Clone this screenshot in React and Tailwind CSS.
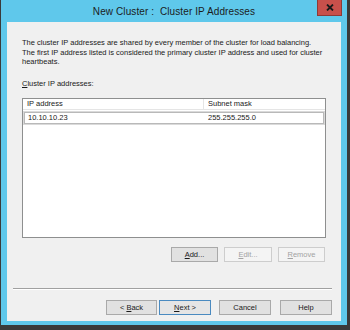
import React from 'react';

const font = { fontFamily: '"Liberation Sans", Arial, sans-serif' };

function Btn({ children, w, disabled, primary }) {
  let cls = 'h-[15px] flex items-center justify-center text-[7.5px] border ';
  if (disabled) cls += 'border-[#cdcdcd] bg-[#f4f4f4] text-[#a3a3a3]';
  else if (primary) cls += 'border-[#4a8ac0] bg-[#e5e5e5] text-[#1a1a1a]';
  else cls += 'border-[#a9a9a9] bg-[#e1e1e1] text-[#1a1a1a]';
  return <div className={cls} style={{ width: w }}>{children}</div>;
}

export default function App() {
  return (
    <div className="w-[350px] h-[330px] bg-[#3a3a3a] flex flex-col" style={font}>
      <div className="ml-[1px] w-[346px] h-[325px] bg-[#5fc8eb] flex flex-col">
        <div className="h-[22px] relative flex items-center justify-center">
          <span className="text-[10px] text-[#1c1c1c] tracking-[0.1px]">New Cluster :&nbsp; Cluster IP Addresses</span>
          <div className="absolute right-[5px] top-0 w-[25px] h-[16px] bg-[#c8504b] border border-t-0 border-[#8e3a37] flex items-center justify-center">
            <svg width="8" height="7" viewBox="0 0 8 7">
              <path d="M1 0.5 L7 6.5 M7 0.5 L1 6.5" stroke="#1a1a1a" strokeWidth="1.8" />
            </svg>
          </div>
        </div>
        <div className="mx-[6px] h-[299px] bg-[#f0f0f0] flex flex-col text-[#1a1a1a]">
          <div className="ml-[15px] mr-[12px] mt-[16px] text-[7.5px] leading-[9.5px]">
            <p>The cluster IP addresses are shared by every member of the cluster for load balancing.</p>
            <p>The first IP address listed is considered the primary cluster IP address and used for cluster heartbeats.</p>
          </div>
          <div className="ml-[15px] mt-[12px] text-[7.5px] leading-[9.5px]"><u>C</u>luster IP addresses:</div>
          <div className="ml-[15px] mt-[10px] w-[304px] h-[140px] bg-white border border-[#8e8f8f] flex flex-col">
            <div className="flex h-[11px] text-[7.5px] border-b border-[#e5e5e5]">
              <div className="w-[181px] pl-[4px] border-r border-[#e5e5e5] leading-[10px]">IP address</div>
              <div className="pl-[4px] leading-[10px]">Subnet mask</div>
            </div>
            <div className="mx-[1px] mt-[2px] h-[12px] flex text-[7.5px] border border-[#b9b9b9] outline outline-1 outline-[#dadada] leading-[10px]">
              <div className="w-[180px] pl-[3px]">10.10.10.23</div>
              <div className="pl-[3px]">255.255.255.0</div>
            </div>
          </div>
          <div className="mt-[9px] ml-[164px] flex gap-[6px]">
            <Btn w={47}><span><u>A</u>dd...</span></Btn>
            <Btn w={48} disabled><span><u>E</u>dit...</span></Btn>
            <Btn w={47} disabled><span><u>R</u>emove</span></Btn>
          </div>
          <div className="mt-[26px] ml-[6px] w-[319px] h-[2px] border-t border-[#a0a0a0] border-b border-b-white"></div>
          <div className="mt-[10px] ml-[99px] flex">
            <Btn w={51}><span>&lt; <u>B</u>ack</span></Btn>
            <div className="w-[2px]"></div>
            <Btn w={52} primary><span><u>N</u>ext &gt;</span></Btn>
            <div className="w-[8px]"></div>
            <Btn w={52}>Cancel</Btn>
            <div className="w-[9px]"></div>
            <Btn w={52}>Help</Btn>
          </div>
        </div>
      </div>
    </div>
  );
}
